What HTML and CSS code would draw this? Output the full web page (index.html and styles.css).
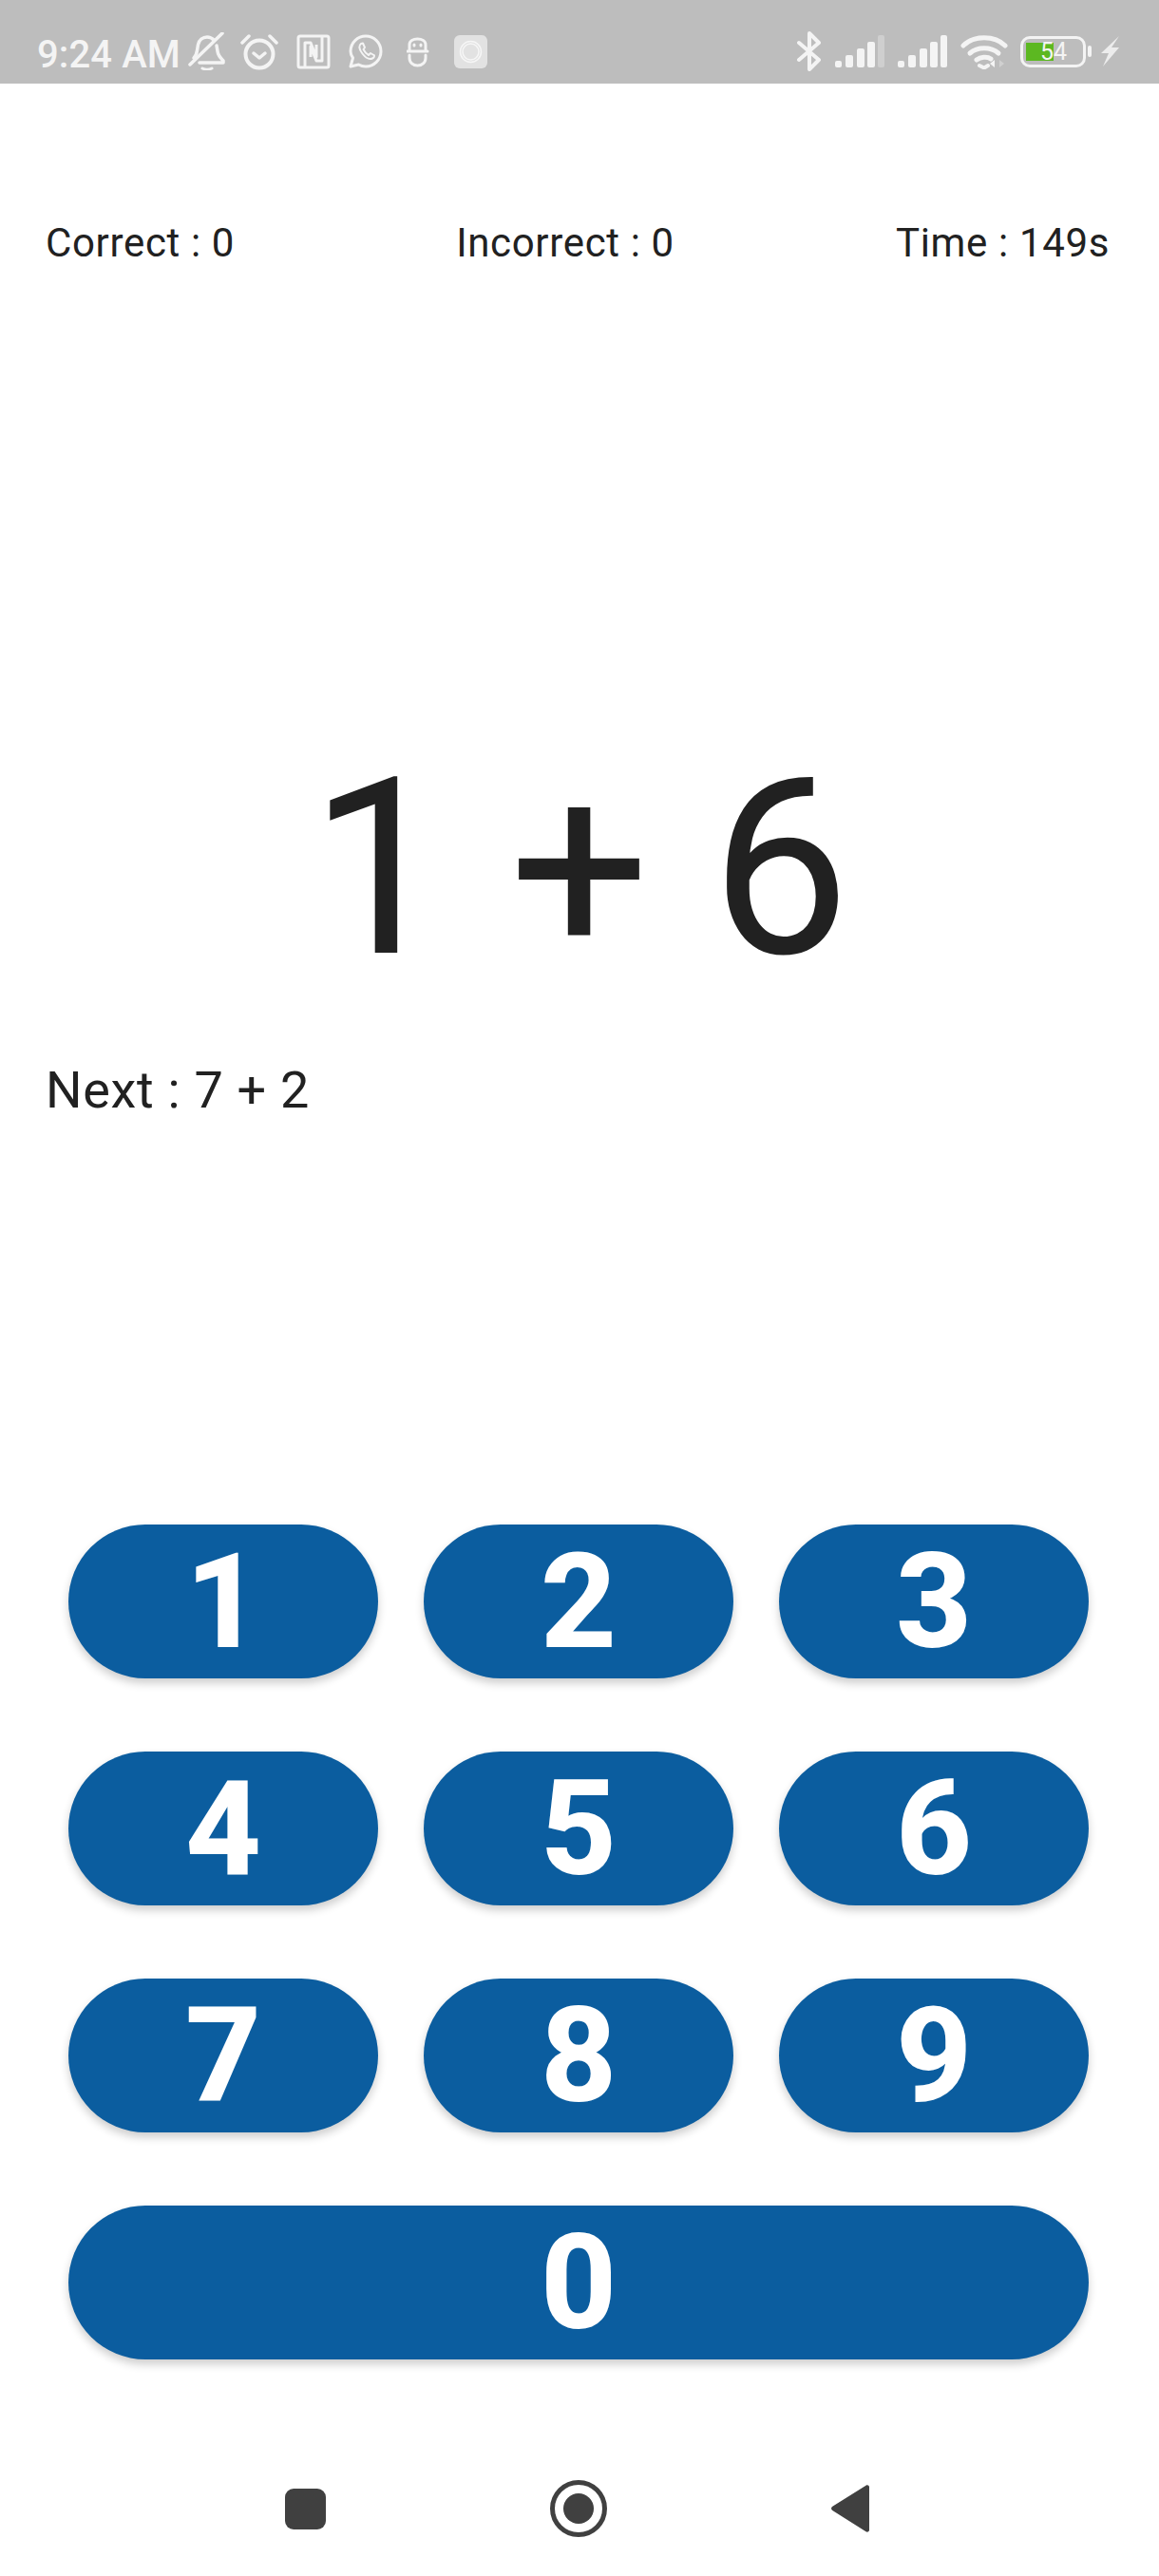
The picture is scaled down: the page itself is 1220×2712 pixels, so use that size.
FILE: index.html
```html
<!DOCTYPE html>
<html lang="en">
<head>
    <meta charset="UTF-8">
    <meta name="viewport" content="width=device-width, initial-scale=1.0">
    <title>Math Game</title>
    <link rel="stylesheet" href="styles.css">
</head>
<body>

    <!-- Status Bar -->
    <header class="status-bar">
        <div class="status-left">
            <span class="status-time">9:24 AM</span>
            <svg class="icon" width="40" height="40" viewBox="0 0 40 40" fill="none" stroke="#f4f4f4" stroke-width="3.500" stroke-linecap="round" stroke-linejoin="round">
                <path d="M6 27c2-2 3-4 3.500-8l1-6c1-5 5-8 9.500-8 3 0 5 1 7 3"/>
                <path d="M30 14l1 6c.5 4 3 7 6 10v2H12"/>
                <path d="M2 34L36 1"/>
                <path d="M15 38c3 1.500 7 1.500 10 0" stroke-width="3"/>
            </svg>
            <svg class="icon" width="44" height="40" viewBox="0 0 44 40" fill="none" stroke="#f4f4f4" stroke-linecap="round" stroke-linejoin="round">
                <circle cx="20" cy="23" r="14.500" stroke-width="4"/>
                <path d="M14 22l6 5 6-5" stroke-width="3.500"/>
                <path d="M2 11l7-7M38 11l-7-7" stroke-width="3.500"/>
            </svg>
            <svg class="icon" width="40" height="37" viewBox="0 0 40 37" fill="none" stroke="#f4f4f4" stroke-width="3" stroke-linejoin="round">
                <rect x="2" y="2" width="32" height="33" rx="2"/>
                <path d="M9 35V9h6l6 15V11M27 2v26h-6l-6-15v11"/>
            </svg>
            <svg class="icon" width="46" height="36" viewBox="0 0 46 36" fill="none" stroke="#f4f4f4" stroke-width="3" stroke-linejoin="round" stroke-linecap="round">
                <path d="M2 34l2.500-9C3 23 2 20.500 2 18 2 9 9.500 2 18 2s16 7 16 16-7.500 16-16 16c-3 0-5.500-.8-7.500-2z"/>
                <path d="M13 10c-2.500 2-2 6 1.500 10.500S22 27 25 25.500c2-1 2.500-3 1.500-3.500l-3.500-2-2 2c-2-1-4.500-4-5.500-6l1.500-2-2-4.500z" stroke-width="2"/>
            </svg>
            <svg class="icon" width="35" height="33" viewBox="0 0 35 33" fill="none" stroke="#f4f4f4" stroke-width="3" stroke-linecap="round">
                <path d="M3 15V9c0-4 4-6 8.500-6S20 5 20 9v6"/>
                <path d="M1 16h21"/>
                <path d="M3 20v3c0 5 4 8 8.500 8s8.500-3 8.500-8v-3"/>
                <path d="M8 9v1M15 9v1"/>
            </svg>
            <svg class="icon" width="35" height="35" viewBox="0 0 35 35" fill="none">
                <rect width="35" height="35" rx="6" fill="#e2e2e2"/>
                <circle cx="17.500" cy="17.500" r="11" stroke="#f6f6f6" stroke-width="1.500"/>
                <circle cx="17.500" cy="17.500" r="8.500" stroke="#f6f6f6" stroke-width="1.500"/>
            </svg>
        </div>
        <div class="status-right">
            <svg class="icon" width="27" height="42" viewBox="0 0 27 42" fill="none" stroke="#f4f4f4" stroke-width="4" stroke-linejoin="round" stroke-linecap="round">
                <path d="M3 12l21 18-10 10V2l10 10L3 30"/>
            </svg>
            <svg class="icon" width="52" height="34" viewBox="0 0 52 34">
                <rect x="0" y="27" width="7" height="7" rx="2" fill="#f4f4f4"/>
                <rect x="11" y="21" width="8" height="13" rx="2" fill="#f4f4f4"/>
                <rect x="23" y="14" width="8" height="20" rx="2" fill="#f4f4f4"/>
                <rect x="34" y="7" width="8" height="27" rx="2" fill="#f4f4f4"/>
                <rect x="45" y="0" width="7" height="34" rx="2" fill="#cfcfcf"/>
            </svg>
            <svg class="icon" width="52" height="34" viewBox="0 0 52 34">
                <rect x="0" y="27" width="7" height="7" rx="2" fill="#f4f4f4"/>
                <rect x="11" y="21" width="8" height="13" rx="2" fill="#f4f4f4"/>
                <rect x="23" y="14" width="8" height="20" rx="2" fill="#f4f4f4"/>
                <rect x="34" y="7" width="8" height="27" rx="2" fill="#f4f4f4"/>
                <rect x="45" y="0" width="7" height="34" rx="2" fill="#f4f4f4"/>
            </svg>
            <svg class="icon" width="52" height="37" viewBox="0 0 52 37" fill="none" stroke="#f4f4f4" stroke-width="5" stroke-linecap="round">
                <path d="M3 12C14 1 36 1 47 12"/>
                <path d="M10 20c8-7 22-7 30 0"/>
                <path d="M17 27c4-3 11-4 15-1"/>
                <path d="M20 33l5 2.500 4-2.500" stroke-width="4"/>
                <path d="M36 27v8l-5-4z" fill="#f4f4f4" stroke="none"/>
                <path d="M41 27l5 4-5 4z" fill="#d0d0d0" stroke="none"/>
            </svg>
            <div class="battery">
                <div class="battery-body">
                    <div class="battery-fill"></div>
                    <span class="battery-text">54</span>
                </div>
                <div class="battery-tip"></div>
            </div>
            <svg class="icon" width="22" height="32" viewBox="0 0 22 32">
                <path d="M21 0L2 18h8L4 32l17-20h-8z" fill="#ececec"/>
            </svg>
        </div>
    </header>

    <!-- Score Row -->
    <section class="score-row">
        <span>Correct : 0</span>
        <span>Incorrect : 0</span>
        <span>Time : 149s</span>
    </section>

    <!-- Question -->
    <section class="question">1 + 6</section>
    <section class="next-question">Next : 7 + 2</section>

    <!-- Keypad -->
    <section class="keypad">
        <button class="key" type="button">1</button>
        <button class="key" type="button">2</button>
        <button class="key" type="button">3</button>
        <button class="key" type="button">4</button>
        <button class="key" type="button">5</button>
        <button class="key" type="button">6</button>
        <button class="key" type="button">7</button>
        <button class="key" type="button">8</button>
        <button class="key" type="button">9</button>
        <button class="key key-wide" type="button">0</button>
    </section>

    <!-- Navigation Bar -->
    <footer class="nav-bar">
        <svg width="43" height="43" viewBox="0 0 43 43"><rect width="43" height="43" rx="9" fill="#404040"/></svg>
        <svg width="60" height="60" viewBox="0 0 60 60" fill="none">
            <circle cx="30" cy="30" r="27.500" stroke="#404040" stroke-width="5"/>
            <circle cx="30" cy="30" r="16" fill="#404040"/>
        </svg>
        <svg width="40" height="50" viewBox="0 0 40 50"><path d="M36.500 .800c1.300-1 3.500-.3 3.500 1.700v45c0 2-2.200 2.700-3.500 1.700L1.300 27c-1.700-1.200-1.700-3 0-4.200z" fill="#404040"/></svg>
    </footer>

</body>
</html>
```

FILE: styles.css
```css
/* General Styles */
html, body {
    margin: 0;
    height: 2712px;
    overflow: hidden;
}

body {
    display: flex;
    flex-direction: column;
    width: 1220px;
    font-family: 'Roboto', sans-serif;
    color: #212121;
    background-color: #fff;
}

/* Status Bar */
.status-bar {
    display: flex;
    justify-content: space-between;
    align-items: center;
    flex-shrink: 0;
    box-sizing: border-box;
    height: 88px;
    padding: 20px 41px 0 39px;
    background-color: #bdbdbd;
    color: #f4f4f4;
}

.status-left,
.status-right {
    display: flex;
    align-items: center;
}

.status-left {
    gap: 15px;
}

.status-right {
    gap: 14px;
}

.status-time {
    margin-top: 6px;
    margin-right: -7px;
    font-size: 40px;
    font-weight: 500;
    letter-spacing: 0.1px;
}

.icon {
    display: block;
}

/* Battery */
.battery {
    display: flex;
    align-items: center;
    gap: 2px;
    margin-left: -3px;
    margin-right: -6px;
}

.battery-body {
    position: relative;
    box-sizing: border-box;
    width: 69px;
    height: 33px;
    border: 3px solid #f4f4f4;
    border-radius: 10px;
    padding: 4px 3px;
}

.battery-fill {
    width: 50%;
    height: 100%;
    background-color: #5cb821;
}

.battery-text {
    position: absolute;
    top: 0;
    left: 18px;
    font-size: 25px;
    line-height: 27px;
    color: #f4f4f4;
}

.battery-tip {
    width: 4px;
    height: 12px;
    border-radius: 2px;
    background-color: #f4f4f4;
}

/* Score Row */
.score-row {
    display: flex;
    justify-content: space-between;
    margin-top: 143px;
    padding: 0 52px 0 48px;
    font-size: 42px;
    line-height: 50px;
    letter-spacing: 0.65px;
}

/* Question */
.question {
    margin-top: 481px;
    font-size: 260px;
    line-height: 304px;
    text-align: center;
}

.next-question {
    margin-top: 50px;
    padding-left: 48px;
    font-size: 54px;
    line-height: 64px;
    letter-spacing: 0.7px;
}

/* Keypad */
.keypad {
    display: grid;
    grid-template-columns: repeat(3, 326px);
    grid-auto-rows: 162px;
    column-gap: 48px;
    row-gap: 77px;
    margin-top: 425px;
    padding-left: 72px;
}

.key {
    border: none;
    border-radius: 81px;
    padding: 2px 0 0;
    background-color: #0b5d9f;
    color: #fff;
    font-family: 'Roboto', sans-serif;
    font-size: 139px;
    font-weight: 760;
    line-height: 160px;
    box-shadow: 0 5px 10px rgba(0, 0, 0, 0.2);
}

.key-wide {
    grid-column: 1 / 4;
}

/* Navigation Bar */
.nav-bar {
    display: flex;
    align-items: center;
    justify-content: space-between;
    box-sizing: border-box;
    margin-top: 127px;
    padding-left: 300px;
    width: 915px;
}
```
